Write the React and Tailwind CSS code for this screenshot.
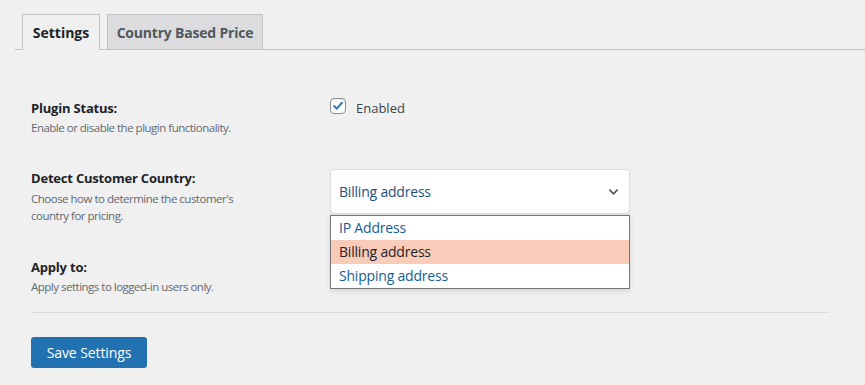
import React from "react";

function Check() {
  return (
    <span className="inline-flex h-4 w-4 items-center justify-center rounded-[4px] border border-[#8c8f94] bg-white shadow-[inset_0_1px_2px_rgba(0,0,0,0.1)]">
      <svg viewBox="0 0 20 20" className="h-[18px] w-[18px]">
        <path d="M4.5 10 L8.3 13.8 L15.6 5.4" fill="none" stroke="#2f7fc1" strokeWidth="3" strokeLinecap="round" strokeLinejoin="round" />
      </svg>
    </span>
  );
}

export default function App() {
  return (
    <div className="h-[385px] w-full overflow-hidden bg-[#f0f0f1] font-['Open_Sans','Noto_Sans',sans-serif] text-[#1d2327]">
      <div className="pt-[14px] pl-[15px]">
        <div className="flex items-end gap-[7px] border-b border-[#c3c4c7] pl-[7px]">
          <div className="-mb-px flex h-[36px] w-[78px] items-center justify-center border border-b-0 border-[#c3c4c7] bg-[#f0f0f1] text-[14px] font-bold text-[#1d2327]">
            Settings
          </div>
          <div className="flex h-[35px] w-[156px] items-center justify-center border border-b-0 border-[#c3c4c7] bg-[#dcdcde] text-[14px] font-bold tracking-[-0.2px] text-[#50575e]">
            Country Based Price
          </div>
        </div>
      </div>

      <div className="px-[31px]">
        {/* Row 1 */}
        <div className="mt-[48px] flex">
          <div className="w-[299px]">
            <div className="text-[13px] font-bold leading-[20px] tracking-[-0.2px]">Plugin Status:</div>
            <div className="mt-px text-[11.5px] leading-[18px] tracking-[-0.5px] text-[#646970]">Enable or disable the plugin functionality.</div>
          </div>
          <div className="flex items-start">
            <Check />
            <span className="ml-[10px] text-[13px] leading-[20px] text-[#3c434a]">Enabled</span>
          </div>
        </div>

        {/* Row 2 */}
        <div className="mt-[31px] flex items-start">
          <div className="w-[299px]">
            <div className="text-[13px] font-bold leading-[20px] tracking-[-0.2px]">Detect Customer Country:</div>
            <div className="mt-[2px] w-[230px] text-[11.5px] leading-[17px] tracking-[-0.5px] text-[#646970]">
              Choose how to determine the customer's country for pricing.
            </div>
          </div>
          <div className="relative z-10 mt-px w-[300px]">
            <div className="flex h-[45px] items-center justify-between rounded-[4px] border border-[#dcdcde] bg-white pl-[8px] pr-[10px] shadow-[0_1px_2px_rgba(0,0,0,0.06)]">
              <span className="text-[14px] tracking-[-0.2px] text-[#1d4f7c]">Billing address</span>
              <svg viewBox="0 0 12 8" className="h-[8px] w-[11px]">
                <path d="M1.5 1.5 L6 6 L10.5 1.5" fill="none" stroke="#50575e" strokeWidth="1.8" />
              </svg>
            </div>
            <div className="absolute left-0 top-full mt-px w-full border border-[#767676] bg-white text-[14px] leading-[24px] tracking-[-0.2px] shadow-[0_2px_5px_rgba(0,0,0,0.12)]">
              <div className="px-[8px] text-[#135e96]">IP Address</div>
              <div className="bg-[#f9cbb9] px-[8px] text-[#1d2327]">Billing address</div>
              <div className="px-[8px] text-[#135e96]">Shipping address</div>
            </div>
          </div>
        </div>

        {/* Row 3 */}
        <div className="mt-[33px] flex">
          <div className="w-[299px]">
            <div className="text-[13px] font-bold leading-[20px] tracking-[-0.2px]">Apply to:</div>
            <div className="mt-px text-[11.5px] leading-[18px] tracking-[-0.5px] text-[#646970]">Apply settings to logged-in users only.</div>
          </div>
          <div className="mt-px">
            <Check />
          </div>
        </div>

        <div className="mt-[16px] h-px w-[799px] bg-[#dcdcde]" />

        <button className="mt-[24px] h-[31px] w-[116px] rounded-[3px] bg-[#2271b1] text-[14px] tracking-[-0.1px] text-white">
          Save Settings
        </button>
      </div>
    </div>
  );
}
